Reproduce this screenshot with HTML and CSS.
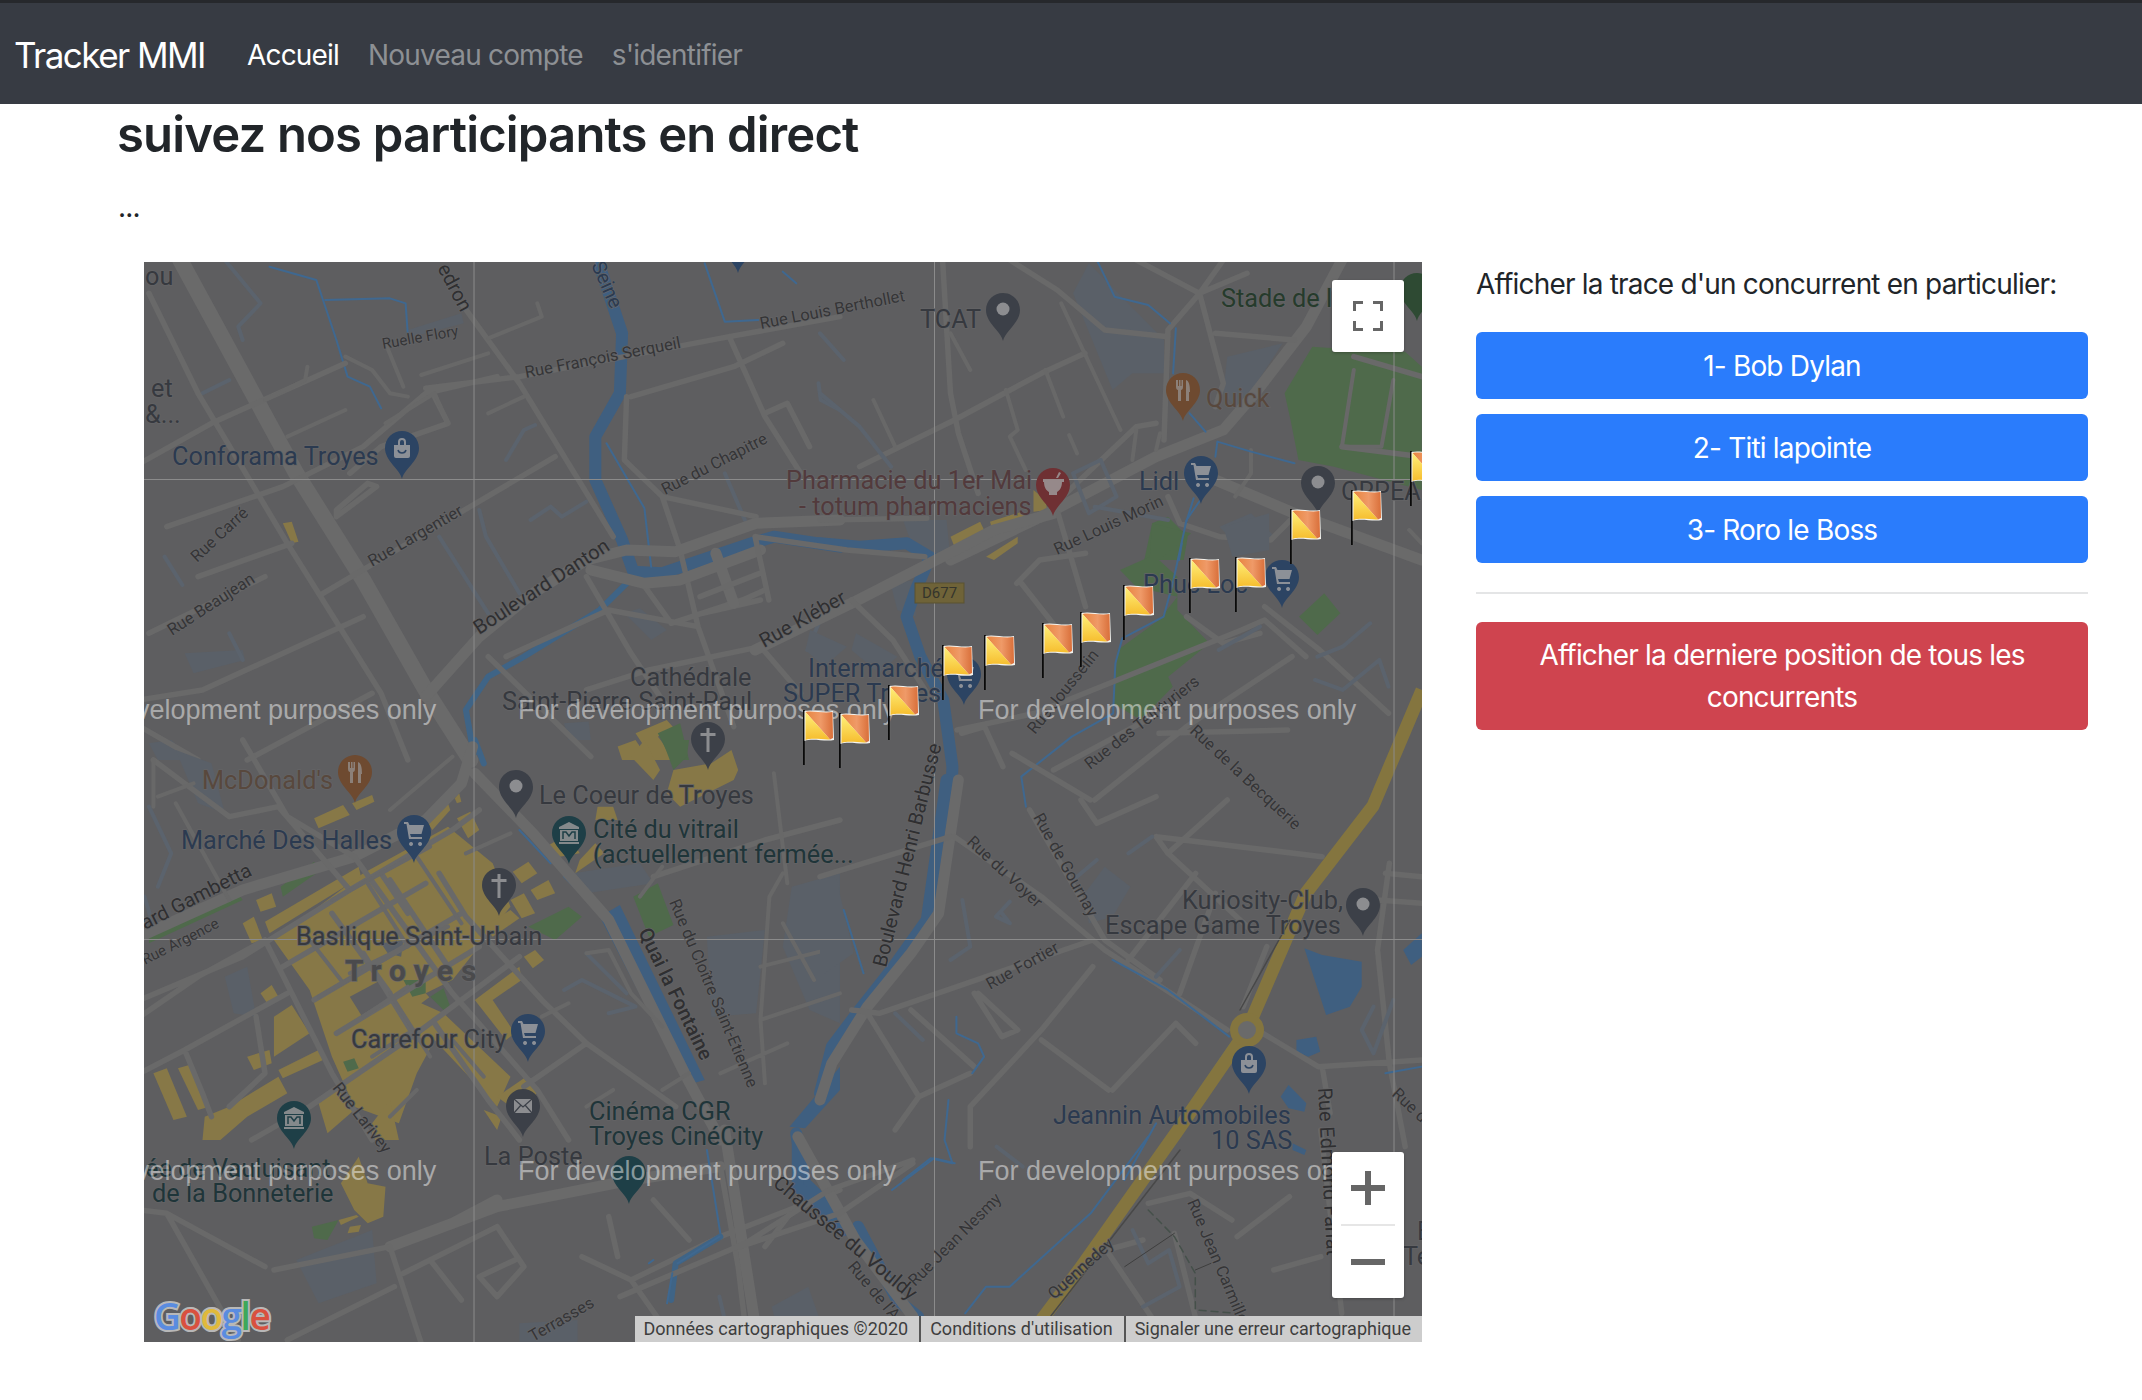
FILE: index.html
```html
<!DOCTYPE html>
<html lang="fr">
<head>
<meta charset="utf-8">
<title>Tracker MMI</title>
<link rel="stylesheet" href="styles.css">
</head>
<body>
<nav class="navbar">
  <a class="brand">Tracker MMI</a>
  <a class="nav-link active">Accueil</a>
  <a class="nav-link">Nouveau compte</a>
  <a class="nav-link">s'identifier</a>
</nav>
<main class="page">
  <h1 class="title">suivez nos participants en direct</h1>
  <p class="dots">...</p>
  <div class="row">
    <div class="map">
      <svg class="map-svg" width="1278" height="1080" viewBox="144 262 1278 1080" xmlns="http://www.w3.org/2000/svg">
        <defs>
          <linearGradient id="fy" x1="0" y1="0" x2="0" y2="1"><stop offset="0" stop-color="#fff07a"/><stop offset="1" stop-color="#f6bd2e"/></linearGradient>
          <linearGradient id="fo" x1="0" y1="0" x2="1" y2="0"><stop offset="0" stop-color="#e8853f"/><stop offset=".55" stop-color="#ef9a68"/><stop offset="1" stop-color="#d96f3a"/></linearGradient>
          <linearGradient id="fp" x1="0" y1="0" x2="1" y2="0"><stop offset="0" stop-color="#000"/><stop offset=".7" stop-color="#222"/><stop offset="1" stop-color="#666"/></linearGradient>
          <symbol id="flag" viewBox="0 0 34 56" width="34" height="56" overflow="visible">
            <rect x="0" y="0" width="2.5" height="55" fill="url(#fp)"/>
            <path d="M1.5 1 C10 -1 20 3 30 1 L31 30 C22 32 10 28 1.5 31 Z" fill="#f5f5f0"/>
            <path d="M2.5 2 C10 0.5 20 3.5 29.5 2 L30 28 L27 29.5 Z" fill="url(#fo)"/>
            <path d="M2.5 2 L27 29.5 C20 30 10 27.5 2.5 30 Z" fill="url(#fy)"/>
          </symbol>
          <symbol id="pin" viewBox="0 0 34 48" width="34" height="48">
            <path d="M17 48 C15 38 0 30 0 17 C0 7 8 0 17 0 C26 0 34 7 34 17 C34 30 19 38 17 48 Z" fill="currentColor"/>
          </symbol>
          <g id="g-dot"><circle cx="17" cy="16" r="6.5" fill="#8c8d90"/></g>
          <g id="g-cross"><path d="M15.5 6h3v5h6v3h-6v16h-3V14h-6v-3h6z" fill="#8c8d90"/></g>
          <g id="g-cart"><path d="M7 7h4l1.500 3H27l-2.500 9H13l1 3h11v2H12L9.500 9H7z M14 27a2 2 0 1 0 .1 0z M23 27a2 2 0 1 0 .1 0z" fill="#8c9097"/></g>
          <g id="g-bag"><path d="M9 14h16v11a2 2 0 0 1-2 2H11a2 2 0 0 1-2-2z M13 14v-3a4 4 0 0 1 8 0v3h-2v-3a2 2 0 0 0-4 0v3z" fill="#8c9097"/><path d="M13 19c1 4 7 4 8 0" fill="none" stroke="#2c4463" stroke-width="1.500"/></g>
          <g id="g-fork"><path d="M10 7v7c0 2 1 3 2 3v11h3V17c1 0 2-1 2-3V7h-1.500v6h-1V7h-1.500v6h-1V7z M20 28V7c3 1 4 5 4 12h-1v9z" fill="#8c8078"/></g>
          <g id="g-mus"><path d="M17 6l10 5v2H7v-2z M8 14h18v11H8z M7 26h20v2H7z" fill="#84898b"/><path d="M11 23v-7l3 0 3 4 3-4 3 0v7" fill="none" stroke="#1e3f47" stroke-width="1.500"/></g>
          <g id="g-mail"><path d="M8 10h18v14H8z" fill="#8c8d90"/><path d="M8 10l9 8 9-8 M8 24l7-8 M26 24l-7-8" fill="none" stroke="#3c4048" stroke-width="1.200"/></g>
          <g id="g-mort"><path d="M7 11h21v3h-2c0 6-3 9-5 10v3H13v-3c-2-1-5-4-5-10H7z M20 10l3-6 2 1-3 5z" fill="#96898a"/></g>
        </defs>

        <rect x="144" y="262" width="1278" height="1080" class="land"/>

        <g class="z6" transform="translate(140 260) scale(.4464 .3333)">
          <polygon class="pale" points="600,210 720,160 725,190 610,230"/>
          <polygon class="pale" points="1085,1060 1120,1045 1180,1110 1145,1140"/>
          <polygon class="pale" points="100,1180 230,1170 235,1200 120,1240"/>
          <polygon class="pale" points="20,1450 70,1440 120,1500 40,1500"/>
          <polygon class="pale" points="950,1390 1005,1385 1010,1440 960,1440"/>
          <path class="w-thick" d="M1030 20 L1080 220 L1075 400 L1020 530 L1020 660 L1080 840 L1105 935 L1170 940 L1370 850 L1420 830 L1568 860"/>
          <path class="w-mid" d="M1090 970 L1030 1050 L860 1190 L780 1250 L730 1350 L750 1500"/>
          <path class="w-thin" d="M290 20 L395 60 L440 240 L465 350 L515 380 L540 445 M415 120 L560 115 L595 130 L600 225 M1265 10 L1310 185 L1385 180 M1045 550 L1130 745 L1145 920 M1440 35 L1470 70"/>
          <path class="pb" d="M190 0 L270 130 L220 200 L230 240 M55 890 L95 975 M670 830 L780 1060 M760 750 L775 830 L850 1000 M1310 640 L1355 780 M1495 1170 L1530 1060 M140 400 L200 360 M200 1120 L230 1200 M875 780 L920 740 L945 770 L1000 725 M820 600 L860 510 L885 495 M1520 370 L1525 420 L1568 450"/>
          <polygon class="yel" points="320,790 340,785 355,845 340,850"/>
          <polygon class="yel" points="1070,1460 1110,1440 1140,1500 1080,1500"/>
          <polygon class="yel" points="1110,1420 1180,1380 1200,1410 1160,1430 1200,1500 1150,1500"/>
          <polygon class="grn" points="1160,1420 1210,1390 1230,1500 1190,1500"/>
          <path class="r1" d="M90 0 L350 640 L500 960 L640 1290 L740 1500"/>
          <path class="r3" d="M20 100 L130 400 L330 850 L540 1300 L600 1500 M720 130 L850 370 L1060 830 M640 385 L850 350 L1320 230 L1568 170 M1100 410 L1330 320 L1440 250 M1320 230 L1400 470 L1480 640 M0 610 L160 490 L460 310 M60 800 L320 680 L500 560 L640 400 L800 350 M130 950 L340 850 M20 1120 L280 950 M0 1320 L140 1290 L500 1070 M410 1000 L930 590 M1090 410 L1085 600 L1170 710 L1210 870 L1250 1100 L1330 1400 M1170 710 L1380 770 M1400 460 L1450 430 L1500 560 M1120 960 L1190 1090 L1350 1020 L1400 990 M1000 950 L1100 1180 L1180 1340 M820 1190 L1050 1050 L1250 1100 M1260 1060 L1390 1020 M1000 1290 L1140 1230 L1390 1160 L1480 1300 M780 1190 L1010 1490 M240 1500 L520 1300 M0 1400 L130 1500 M650 385 L690 490 L540 560 L470 640 M440 770 L530 680 L510 670 L440 750 Z"/>
          <path class="r2" d="M640 1310 L760 1130 L880 1000 L1000 900 L1090 870 L1200 875 L1380 790 L1568 780 M1290 880 L1330 1030 M1010 930 L1130 970 L1210 960 L1390 870"/>
          <path class="r4" d="M550 250 L590 380 M460 290 L520 330 L560 400 L600 410 M780 235 L900 170 L890 130 M630 345 L780 280 M780 460 L860 410 M280 420 L370 360 L375 320 M330 530 L460 450 M550 490 L660 400 L690 490"/>
        </g>

        <g class="z7" transform="translate(140 740) scale(.4464 .3333)">
          <polygon class="pale" points="1270,590 1400,570 1380,820 1280,830"/>
          <polygon class="pale" points="1460,440 1568,400 1568,850 1500,810 1440,620"/>
          <polygon class="pale" points="970,400 1120,370 1150,430 1000,460"/>
          <polygon class="pale" points="190,710 240,680 260,830 210,820"/>
          <polygon class="pale" points="80,30 160,70 190,220 130,190"/>
          <polygon class="water" points="1030,530 1075,495 1265,1020 1225,1035"/>
          <polygon class="water" points="1455,1160 1568,980 1568,1050 1490,1165"/>
          <path class="w-mid" d="M750 0 L770 70"/>
          <path class="w-thin" d="M760 130 L840 240 M850 270 L920 370 M950 410 L1010 490"/>
          <path class="pb" d="M950 750 L990 720 L1110 800 L1050 820 M1000 640 L1090 760 M20 200 L70 340 L40 440 M10 470 L30 560"/>
          <g class="yel">
            <polygon points="300,600 500,400 690,260 790,370 830,500 700,720 640,760 680,820 830,1010 800,1100 660,900 620,1000 580,1150 480,1100 430,950 380,750"/>
            <polygon points="390,235 455,195 470,225 400,265"/>
            <polygon points="475,190 520,165 525,185 485,210"/>
            <polygon points="640,240 690,190 695,210 655,270"/>
            <polygon points="705,175 715,160 720,185 710,190"/>
            <polygon points="710,235 740,215 760,270 735,295"/>
            <polygon points="835,395 870,365 890,400 855,430"/>
            <polygon points="875,450 915,420 930,460 890,480"/>
            <polygon points="830,480 860,460 885,520 855,535"/>
            <polygon points="770,560 830,510 850,535 790,590"/>
            <polygon points="280,545 490,380 495,410 290,580"/>
            <polygon points="260,480 295,460 305,500 270,515"/>
            <polygon points="230,550 255,530 275,600 250,610"/>
            <polygon points="270,760 295,735 310,770 285,790"/>
            <polygon points="300,830 340,795 380,880 300,950"/>
            <polygon points="240,950 290,930 295,970 255,990"/>
            <polygon points="310,990 400,930 410,960 320,1015"/>
            <polygon points="30,1000 60,985 105,1130 75,1140"/>
            <polygon points="85,985 110,975 155,1100 130,1110"/>
            <polygon points="750,780 850,680 855,720 790,780 840,880 820,900"/>
            <polygon points="860,650 885,630 905,660 880,685"/>
            <polygon points="145,1130 200,1100 310,1010 330,1060 240,1130 180,1200 140,1200"/>
            <polygon points="800,1070 860,1015 890,1060 840,1110"/>
            <polygon points="770,1110 810,1130 800,1170"/>
            <polygon points="1100,50 1130,0 1165,90 1150,120"/>
            <polygon points="1195,90 1280,70 1325,30 1340,90 1330,120 1210,200 1180,160"/>
            <polygon points="1025,200 1060,200 1070,240 1020,240"/>
            <polygon points="910,320 960,280 985,340 940,350"/>
            <polygon points="985,360 1020,310 1040,340 975,400"/>
            <polygon points="400,1090 450,1040 480,1110 420,1180"/>
            <polygon points="520,1150 560,1080 580,1200 520,1200"/>
          </g>
          <polygon class="land" points="470,770 540,720 565,770 500,835"/>
          <polygon class="pale" points="540,610 590,600 585,650 555,640"/>
          <polygon class="land" points="630,790 700,720 740,770 680,820"/>
          <g class="grn">
            <polygon points="870,560 960,500 990,530 930,600"/>
            <polygon points="1105,470 1160,430 1195,555 1140,590"/>
            <polygon points="1170,0 1230,0 1225,50 1195,90"/>
            <polygon points="315,440 390,365 400,395 320,470"/>
            <polygon points="20,590 220,460 230,480 20,610"/>
            <polygon points="650,770 680,745 695,800 680,810"/>
            <polygon points="590,720 640,720 640,760 610,770"/>
            <polygon points="455,965 480,955 490,985 465,995"/>
          </g>
          <path class="r2" d="M0 590 L230 450 L480 350 L640 240 L720 130 L745 20 M750 100 L880 280 L1050 540 L1220 1000 L1300 1200"/>
          <path class="r3" d="M0 780 L230 650 L470 450 L700 270 L760 210 M230 0 L330 230 L480 350 L700 760 L890 1050 L960 1200 M330 760 L100 930 L0 1000 M850 650 L620 880 L380 1100 L250 1200 M660 850 L780 1080 L850 1200 M280 600 L340 760 L430 1000 L520 1200 M670 400 L730 530 L900 780 L1000 910 L1200 1100 M1000 910 L860 1040 M0 830 L130 710 L280 600 M540 400 L600 520 M1150 410 L1400 300 L1568 240 M260 830 L280 1000 L200 1100 M100 930 L140 1060 L160 1130 M30 60 L100 130 L200 230 L310 200 L470 450 M320 680 L640 430 M390 780 L720 520 M440 880 L760 620 M430 520 L560 760 M560 420 L690 680 M500 640 L620 900"/>
          <path class="r4" d="M1440 400 L1410 470 L1390 840 L1400 1030 M1390 680 L1568 620 M1440 550 L1510 720 M1420 100 L1450 430 M1390 840 L1568 760 M1300 1000 L1450 910 M1000 640 L1050 630 L1100 760 L1170 860 M1230 1000 L1170 1050 M1000 1100 L1060 1050 M620 1050 L560 1130 M1170 380 L1120 470 M30 60 L30 200 M40 170 L120 130 M80 190 L200 480 M900 830 L960 790 M700 50 L560 210 M730 340 L830 280 M430 480 L650 320 M510 430 L600 620 M620 350 L720 550 M470 700 L690 560 M400 770 L650 580 M560 760 L650 950 M380 600 L450 720 M500 830 L600 740 M520 950 L600 880 M700 900 L770 1010"/>
        </g>

        <g class="z8" transform="translate(820 260) scale(.3954 .3333)">
          <polygon class="grn" points="1175,400 1245,260 1300,265 1295,275 1480,275 1522,320 1522,690 1300,620 1210,600 1190,480"/>
          <polygon class="grn" points="840,790 880,770 930,830 920,900 820,900"/>
          <polygon class="pale" points="640,100 680,10 870,240 870,340 790,340 740,390"/>
          <polygon class="pale" points="1030,290 1170,250 1060,450 1020,400"/>
          <polygon class="pale" points="1010,800 1090,760 1150,830 1060,860"/>
          <polygon class="pale" points="210,780 320,780 330,900 240,880"/>
          <g class="yel">
            <polygon points="330,830 405,785 415,810 340,860"/>
            <polygon points="430,785 510,755 525,775 435,805"/>
            <polygon points="420,890 500,830 500,850 440,900"/>
            <polygon points="540,690 570,720 575,750 540,755"/>
          </g>
          <path class="r2" d="M1320 0 L1230 200 L1100 400 L1020 510 L850 590 L560 770 L330 900 M960 640 L1200 760 L1522 900"/>
          <path class="r3" d="M310 0 L330 400 L350 520 L400 700 M100 620 L340 480 L560 340 L670 280 M0 780 L270 775 M480 0 L600 90 L720 210 L880 230 M960 100 L880 210 L870 540 M960 100 L1020 370 L1000 440 M1000 220 L1200 240 M560 770 L800 500 L850 490 M1350 290 L1522 350 M1320 560 L1522 590 M880 710 L910 790 L1010 830 L1140 840 L1190 780 M800 0 L960 100 L1080 40 M960 100 L1020 0"/>
          <path class="r4" d="M610 130 L760 510 M470 390 L500 510 L480 530 L520 630 M135 420 L190 560 M630 525 L650 580 M570 330 L615 470 M1350 330 L1320 560 L1420 560 L1450 360 M800 510 L790 600 M860 520 L850 570 M1490 810 L1522 850 M330 220 L380 330 M1090 570 L1090 640 L1050 710"/>
          <path class="pb" d="M0 400 L100 500 L180 620 M0 220 L60 300 M640 640 L710 600 L750 710 L680 760 Z"/>
          <path class="w-thin" d="M700 0 L745 110 L830 135 L885 190 M900 205 L893 340 M935 460 L975 515 M1005 545 L1000 590 M1005 545 L1090 575 L1200 610 M945 715 L925 790 M915 850 L908 900"/>
          <path class="w-thick" d="M0 850 L100 860 L220 850 L290 900"/>
        </g>

        <g class="z3" transform="translate(700 500) scale(.459 .3333)">
          <polygon class="pale" points="240,390 320,440 270,500 230,450"/>
          <polygon class="pale" points="340,400 430,470 390,520 330,450"/>
          <polygon class="pale" points="415,250 470,240 470,350 430,330"/>
          <polygon class="pale" points="1140,80 1240,40 1240,150 1160,170"/>
          <polygon class="grn" points="985,70 1070,100 1000,180 1040,230 1040,330 1110,430 1020,530 1030,560 960,660 900,610 910,450 1000,360 1040,290 950,260 915,210 980,170"/>
          <polygon class="grn" points="1305,350 1360,280 1395,340 1345,405"/>
          <path class="w-thick" d="M500 175 L470 270 L450 350 L480 470 L530 600 L550 800 L545 960"/>
          <path class="w-thin" d="M1090 0 L1060 60 L1030 250 L1010 350 L920 415 L905 490 L900 640 L810 710 L700 830 L710 920"/>
          <path class="r2" d="M120 450 L330 310 L500 190 L640 90 L770 40"/>
          <path class="r3" d="M120 110 L150 300 M0 290 L130 220 M120 110 L320 150 L490 170 M330 300 L420 420 L500 590 M690 250 L740 180 L840 160 M700 250 L780 390 M780 40 L840 320 M570 700 L620 680 L660 800 M560 690 L730 640 L1000 490 L1180 390 L1230 360 L1320 470 M1060 350 L1140 430 L1220 400 M770 810 L1000 640 M1230 320 L1350 450 L1500 640 M860 900 L1060 680 M680 760 L850 900 M1000 700 L1280 690 M1290 470 L1060 680"/>
          <path class="pb" d="M1345 470 L1400 440 L1460 370 M1340 540 L1400 570 L1480 480 L1500 560 M1130 450 L1220 380 M860 20 L1020 60"/>
        </g>

        <g class="z9" transform="translate(820 780) scale(.3954 .3333)">
          <polygon class="pale" points="670,340 720,260 785,320 740,410 680,430"/>
          <polygon class="pale" points="0,300 40,290 85,520 0,590"/>
          <g class="water">
            <polygon points="1225,505 1270,525 1370,545 1370,620 1340,680 1280,705"/>
            <polygon points="1205,780 1255,770 1265,815 1235,830 1205,815"/>
            <polygon points="1185,915 1230,970 1225,995 1185,985 1165,950"/>
            <polygon points="1475,510 1522,460 1522,530 1495,555"/>
            <polygon points="1195,1090 1230,1110 1225,1125 1195,1110"/>
          </g>
          <path class="w-thick" d="M320 0 L300 170 L270 420 L180 570 L100 690 L30 800 L0 940"/>
          <path class="r2" d="M350 0 L300 400 L230 520 L120 680 L30 850 L0 960"/>
          <path class="r3" d="M340 170 L560 350 L720 510 L1030 750 M330 170 L0 290 M530 90 L720 480 L860 600 M690 480 L150 700 L80 690 M690 560 L560 750 L380 980 L380 1100 M560 780 L730 930 M850 170 L1270 230 M850 170 L880 220 L1090 450 M660 60 L700 130 L850 50 M1120 760 L1260 860 L1522 840 M1270 860 L1290 1000 M1440 250 L1410 510 L1440 850 L1480 1100 M1430 280 L1522 290 M1410 360 L1522 370 M880 220 L1030 60 M950 280 L780 540 M1000 340 L910 640 M900 730 L950 790 M900 730 L740 930 M120 700 L250 950 L380 880 M230 690 L390 860 M400 640 L500 750 L460 770 L390 640 M190 1050 L250 950 M1130 500 L1070 680"/>
          <path class="pb" d="M360 360 L380 500 L330 540 M190 700 L260 780 M640 300 L700 240 M780 220 L840 170 M850 590 L910 510 M1400 680 L1370 750 L1400 820 L1450 660 M460 400 L480 430 L445 410 L480 365"/>
          <path class="w-thin" d="M60 390 L110 580 M345 710 L345 760 L400 790 L415 830 L385 880 M325 960 L315 1080 L335 1150 L280 1135 L210 1200 M740 540 L880 630 L1035 770 M1040 790 L920 1000 M850 1030 L770 1200 M1522 860 L1430 880"/>
        </g>

        <g class="z4" transform="translate(140 1100) scale(.4464 .3333)">
          <polygon class="pale" points="350,480 520,390 530,550 400,610"/>
          <polygon class="pale" points="850,670 980,660 980,725 850,725"/>
          <polygon class="grn" points="385,380 445,360 420,420 390,415"/>
          <polygon class="yel" points="470,380 495,375 490,395 465,400"/>
          <polygon class="yel" points="445,360 485,345 490,350 450,375"/>
          <polygon class="yel" points="450,250 490,170 510,250 550,260 545,350 510,370 480,330"/>
          <path class="r2" d="M560 440 L800 320 L1100 240 L1300 200 M700 370 L800 300"/>
          <path class="r3" d="M560 440 L630 730 M300 510 L560 440 M60 340 L220 720 M990 470 L1100 540 L1300 410 L1568 270 M1100 540 L1200 730 M0 330 L60 340 L280 500 M590 520 L800 380 M650 480 L720 600 M800 380 L860 500 L800 590 L760 530 L840 480 M330 720 L570 560 M1050 350 L1070 470 M1300 200 L1340 500 L1360 725 M1150 300 L1230 420 M1400 440 L1480 300"/>
          <path class="w-thin" d="M1270 150 L1300 400 M1140 490 L1150 480"/>
          <path class="w-mid" d="M1190 600 L1200 490 L1300 410"/>
          <path class="w-thick" d="M1470 100 L1490 250 L1568 350"/>
        </g>

        <g class="z5" transform="translate(620 1130) scale(.523 .3333)">
          <polygon class="pale" points="290,530 360,470 380,560 300,590"/>
          <path class="w-thick" d="M340 30 L340 170 L430 300 M455 290 L530 510 L570 560"/>
          <path class="r2" d="M200 0 L260 600 M340 20 L450 330 L560 560"/>
          <path class="r3" d="M0 500 L240 340 L400 180 L560 90 M230 350 L420 250 L560 100 M930 360 L1050 640 M1010 220 L1090 190 L1170 270 M930 360 L1000 330 M1060 310 L1100 560 M1180 320 L1280 200 M1250 420 L1340 380 M1340 0 L1380 550"/>
          <path class="pb" d="M980 300 L1010 400 L1050 360 L1070 470 L1000 530 M190 500 L205 600 M720 50 L770 110"/>
          <path class="w-thin" d="M100 430 L90 520 M110 400 L190 320 M520 180 L600 85 L640 100 M660 550 L700 470 L745 470 L900 250 L1010 20"/>
          <path class="thin-dark" d="M965 410 L1060 310 M1130 400 L1100 420"/>
          <path class="dash" d="M1010 240 L1060 320 L1100 430 L1100 540 L1180 550"/>
        </g>

        <path class="hwy" d="M1422 690 L1373 806 L1306 893 L1247 1030 L1176 1133 L1079 1270 L1025 1342"/>
        <path class="hwy-thin" d="M1290 920 L1240 1010 M1180 1150 L1040 1330"/>
        <circle class="rbt" cx="1247" cy="1030" r="13"/>
        <path class="grid" d="M474 262V1342 M934.500 262V1342 M1394 262V1342 M144 479.500H1422 M144 939.500H1422"/>

        <g class="labels">
          <text class="lb gy" x="145" y="285">ou</text>
          <text class="lb gy" x="151" y="397">et</text>
          <text class="lb gy" x="145" y="423">&amp;...</text>
          <text class="lb nv" x="172" y="465">Conforama Troyes</text>
          <text class="st s14" transform="translate(383 349) rotate(-10)">Ruelle Flory</text>
          <text class="st" transform="translate(526 378) rotate(-11)">Rue François Serqueil</text>
          <text class="st" transform="translate(761 329) rotate(-11)">Rue Louis Berthollet</text>
          <text class="big nv" transform="translate(591 265) rotate(66)">Seine</text>
          <text class="big" transform="translate(437 268) rotate(62)">edron</text>
          <text class="st" transform="translate(665 495) rotate(-27)">Rue du Chapitre</text>
          <text class="st" transform="translate(197 563) rotate(-43)">Rue Carré</text>
          <text class="st" transform="translate(372 567) rotate(-30)">Rue Largentier</text>
          <text class="st" transform="translate(172 636) rotate(-33)">Rue Beaujean</text>
          <text class="big" transform="translate(479 635) rotate(-33)">Boulevard Danton</text>
          <text class="big" transform="translate(764 648) rotate(-29)">Rue Kléber</text>
          <text class="lb gy" x="630" y="686">Cathédrale</text>
          <text class="lb gy" x="502" y="710">Saint-Pierre Saint-Paul</text>
          <text class="lb nv" x="808" y="677">Intermarché</text>
          <text class="lb nv" x="783" y="702">SUPER Troyes</text>
          <text class="lb rd" x="786" y="489">Pharmacie du 1er Mai</text>
          <text class="lb rd" x="799" y="515">- totum pharmaciens</text>
          <text class="lb gy" x="920" y="328">TCAT</text>
          <text class="lb gn" x="1221" y="307">Stade de l</text>
          <text class="lb br" x="1206" y="407">Quick</text>
          <text class="lb nv" x="1139" y="490">Lidl</text>
          <text class="lb gy" x="1341" y="500">ORPEA</text>
          <text class="lb nv" x="1143" y="593">Phuc Loc</text>
          <text class="st" transform="translate(1057 555) rotate(-25)">Rue Louis Morin</text>
          <text class="st" transform="translate(1035 735) rotate(-51)">Rue Jousselin</text>
          <text class="st" transform="translate(1090 770) rotate(-38)">Rue des Teinturiers</text>
          <text class="st" transform="translate(1189 732) rotate(43)">Rue de la Becquerie</text>
          <text class="big" transform="translate(886 968) rotate(-76)">Boulevard Henri Barbusse</text>
          <text class="st" transform="translate(966 843) rotate(43)">Rue du Voyer</text>
          <text class="st" transform="translate(1033 817) rotate(61)">Rue de Gournay</text>
          <text class="st" transform="translate(990 990) rotate(-29)">Rue Fortier</text>
          <text class="lb gy" x="1182" y="909">Kuriosity-Club,</text>
          <text class="lb gy" x="1105" y="934">Escape Game Troyes</text>
          <text class="lb nv" x="1053" y="1124">Jeannin Automobiles</text>
          <text class="lb nv" x="1211" y="1149">10 SAS</text>
          <text class="big" transform="translate(1318 1088) rotate(87)">Rue Edmond Fariat</text>
          <text class="st" transform="translate(1187 1202) rotate(67)">Rue Jean Carmille</text>
          <text class="st" transform="translate(915 1287) rotate(-45)">Rue Jean Nesmy</text>
          <text class="st" transform="translate(1054 1300) rotate(-42)">Quennedey</text>
          <text class="big" transform="translate(772 1185) rotate(40)">Chaussée du Vouldy</text>
          <text class="st" transform="translate(847 1267) rotate(50)">Rue de l'Aube</text>
          <text class="st" transform="translate(1391 1095) rotate(43)">Rue de</text>
          <text class="lb gy" x="1403" y="1265">Te</text>
          <text class="lb gy" x="1417" y="1240">E</text>
          <text class="st" transform="translate(533 1342) rotate(-30)">Terrasses</text>
          <text class="st" transform="translate(332 1088) rotate(52)">Rue Larivey</text>
          <text class="lb br" x="202" y="789">McDonald's</text>
          <text class="lb nv" x="181" y="849">Marché Des Halles</text>
          <text class="lb gy" x="539" y="804">Le Coeur de Troyes</text>
          <text class="lb tl" x="593" y="838">Cité du vitrail</text>
          <text class="lb tl" x="593" y="863">(actuellement fermée...</text>
          <text class="lb gy" x="296" y="945">Basilique Saint-Urbain</text>
          <text class="town" x="345" y="981">Troyes</text>
          <text class="lb gy" x="351" y="1048">Carrefour City</text>
          <text class="big" transform="translate(145 930) rotate(-27)">ard Gambetta</text>
          <text class="st s15" transform="translate(145 965) rotate(-27)">Rue Argence</text>
          <text class="big b19" transform="translate(638 932) rotate(64)">Quai la Fontaine</text>
          <text class="st" transform="translate(669 902) rotate(67)">Rue du Cloître Saint-Etienne</text>
          <text class="lb tl" x="589" y="1120">Cinéma CGR</text>
          <text class="lb tl" x="589" y="1145">Troyes CinéCity</text>
          <text class="lb gy" x="484" y="1165">La Poste</text>
          <text class="lb tl" x="145" y="1177">ée de Vauluisant</text>
          <text class="lb tl" x="152" y="1202">de la Bonneterie</text>
          <rect class="shield" x="915" y="583" width="49" height="20"/>
          <text class="shield-t" x="939.500" y="598">D677</text>
        </g>

        <g class="pins">
          <g class="c-br"><use href="#pin" x="338" y="755"/><use href="#g-fork" x="338" y="755"/></g>
          <g class="c-nv"><use href="#pin" x="397" y="815"/><use href="#g-cart" x="397" y="815"/></g>
          <g class="c-gy"><use href="#pin" x="499" y="770"/><use href="#g-dot" x="499" y="770"/></g>
          <g class="c-tl"><use href="#pin" x="552" y="816"/><use href="#g-mus" x="552" y="816"/></g>
          <g class="c-gy"><use href="#pin" x="482" y="868"/><use href="#g-cross" x="482" y="868"/></g>
          <g class="c-nv"><use href="#pin" x="511" y="1014"/><use href="#g-cart" x="511" y="1014"/></g>
          <g class="c-gy"><use href="#pin" x="506" y="1089"/><use href="#g-mail" x="506" y="1089"/></g>
          <g class="c-tl"><use href="#pin" x="277" y="1101"/><use href="#g-mus" x="277" y="1101"/></g>
          <g class="c-tl"><use href="#pin" x="612" y="1156"/></g>
          <g class="c-gy"><use href="#pin" x="691" y="722"/><use href="#g-cross" x="691" y="722"/></g>
          <g class="c-nv"><use href="#pin" x="385" y="431"/><use href="#g-bag" x="385" y="431"/></g>
          <g class="c-gy"><use href="#pin" x="986" y="293"/><use href="#g-dot" x="986" y="293"/></g>
          <g class="c-br"><use href="#pin" x="1166" y="373"/><use href="#g-fork" x="1166" y="373"/></g>
          <g class="c-rd"><use href="#pin" x="1036" y="468"/><use href="#g-mort" x="1036" y="468"/></g>
          <g class="c-nv"><use href="#pin" x="1184" y="456"/><use href="#g-cart" x="1184" y="456"/></g>
          <g class="c-gy"><use href="#pin" x="1301" y="466"/><use href="#g-dot" x="1301" y="466"/></g>
          <g class="c-nv"><use href="#pin" x="947" y="657"/><use href="#g-cart" x="947" y="657"/></g>
          <g class="c-nv"><use href="#pin" x="1265" y="560"/><use href="#g-cart" x="1265" y="560"/></g>
          <g class="c-gn"><use href="#pin" x="1400" y="273"/></g>
          <g class="c-gy"><use href="#pin" x="1346" y="888"/><use href="#g-dot" x="1346" y="888"/></g>
          <g class="c-nv"><use href="#pin" x="1232" y="1046"/><use href="#g-bag" x="1232" y="1046"/></g>
          <g class="c-nv"><use href="#pin" x="721" y="225"/></g>
        </g>

        <g class="wm">
          <text x="58" y="719">For development purposes only</text>
          <text x="518" y="719">For development purposes only</text>
          <text x="978" y="719">For development purposes only</text>
          <text x="58" y="1180">For development purposes only</text>
          <text x="518" y="1180">For development purposes only</text>
          <text x="978" y="1180">For development purposes only</text>
        </g>

        <text class="glogo" x="154" y="1330"><tspan class="g-b">G</tspan><tspan class="g-r">o</tspan><tspan class="g-y">o</tspan><tspan class="g-b">g</tspan><tspan class="g-g">l</tspan><tspan class="g-r">e</tspan></text>

        <g class="flags">
          <use href="#flag" x="803" y="710"/>
          <use href="#flag" x="839" y="713"/>
          <use href="#flag" x="888" y="685"/>
          <use href="#flag" x="942" y="645"/>
          <use href="#flag" x="984" y="635"/>
          <use href="#flag" x="1042" y="623"/>
          <use href="#flag" x="1080" y="612"/>
          <use href="#flag" x="1123" y="585"/>
          <use href="#flag" x="1189" y="558"/>
          <use href="#flag" x="1235" y="557"/>
          <use href="#flag" x="1290" y="509"/>
          <use href="#flag" x="1351" y="490"/>
          <use href="#flag" x="1410" y="451"/>
        </g>
      </svg>

      <button class="map-btn fullscreen" aria-label="Plein écran">
        <svg width="34" height="34" viewBox="0 0 34 34"><path d="M2 12V2h10v3H5v7z M22 2h10v10h-3V5h-7z M2 22h3v7h7v3H2z M29 22h3v10H22v-3h7z" fill="#666"/></svg>
      </button>
      <div class="map-btn zoom">
        <button class="zoom-b" aria-label="Zoom avant"><svg width="34" height="34" viewBox="0 0 34 34"><path d="M14 0h6v14h14v6H20v14h-6V20H0v-6h14z" fill="#666"/></svg></button>
        <span class="zoom-sep"></span>
        <button class="zoom-b" aria-label="Zoom arrière"><svg width="34" height="34" viewBox="0 0 34 34"><path d="M0 14h34v6H0z" fill="#666"/></svg></button>
      </div>
      <div class="attrib">
        <span class="attrib-i">Données cartographiques ©2020</span>
        <span class="attrib-i">Conditions d'utilisation</span>
        <span class="attrib-i">Signaler une erreur cartographique</span>
      </div>
    </div>
    <aside class="side">
      <p class="side-t">Afficher la trace d'un concurrent en particulier:</p>
      <div class="btns">
        <button class="btn blue">1- Bob Dylan</button>
        <button class="btn blue">2- Titi lapointe</button>
        <button class="btn blue">3- Roro le Boss</button>
      </div>
      <hr class="sep">
      <button class="btn red">Afficher la derniere position de tous les concurrents</button>
    </aside>
  </div>
</main>
</body>
</html>
```
FILE: styles.css
```css
* { box-sizing: border-box; }
html, body { margin: 0; padding: 0; background: #fff; }
body { font-family: Inter, "Liberation Sans", sans-serif; font-size: 28px; line-height: 42px; color: #212529; letter-spacing: -.029em; }

.navbar { height: 104px; background: #373b43; border-top: 3px solid #26282c; display: flex; align-items: center; padding: 3px 0 0 14px; gap: 29px; }
.brand { color: #fff; font-size: 35px; margin-right: 13px; letter-spacing: -.044em; }
.nav-link { color: #8d9094; }
.nav-link.active { color: #fff; }

.page { padding-left: 117px; }
.title { margin: 0; padding-top: 1px; font-size: 49px; line-height: 60px; font-weight: 600; letter-spacing: -.017em; }
.dots { margin: 21px 0 0; height: 76px; padding-left: 1px; }
.row { display: flex; padding-left: 27px; gap: 54px; align-items: flex-start; }

.map { position: relative; width: 1278px; height: 1080px; flex: none; overflow: hidden; background: #5e5e60; }
.map-svg { display: block; }
.land { fill: #5e5e60; }
.pale { fill: #5a6068; }
.water, .water polygon { fill: #3f5f80; }
.yel, .yel polygon { fill: #877847; }
.grn, .grn polygon { fill: #4f6a4b; }

.r1, .r2, .r3, .r4, .pb, .w-thin, .w-mid, .w-thick, .thin-dark, .dash, .hwy, .hwy-thin, .grid {
  fill: none; vector-effect: non-scaling-stroke; stroke-linejoin: round; stroke-linecap: round;
}
.r1 { stroke: #6a6a6a; stroke-width: 16px; }
.r2 { stroke: #6a6a6a; stroke-width: 11px; }
.r3 { stroke: #696969; stroke-width: 5.5px; }
.r4 { stroke: #686868; stroke-width: 4px; }
.pb { stroke: #5b636d; stroke-width: 4px; }
.w-thin { stroke: #3f6890; stroke-width: 2px; }
.w-mid { stroke: #3f6486; stroke-width: 6px; }
.w-thick { stroke: #3f5f80; stroke-width: 12px; }
.thin-dark { stroke: #3e3e3e; stroke-width: 1px; }
.dash { stroke: #45504a; stroke-width: 1.5px; stroke-dasharray: 7 5; }
.hwy { stroke: #84753f; stroke-width: 13px; stroke-linecap: butt; }
.hwy-thin { stroke: #484848; stroke-width: 1.5px; }
.rbt { fill: #6a6a6a; stroke: #84753f; stroke-width: 8px; }
.grid { stroke: #8b8b8b; stroke-width: 1px; stroke-linecap: butt; }

.labels text { letter-spacing: 0; font-family: Roboto, sans-serif; paint-order: stroke; stroke: #646466; stroke-width: 1.5px; }
.lb { font-size: 25.300px; }
.st { font-size: 16.500px; fill: #353537; }
.s14 { font-size: 15px; }
.s15 { font-size: 15px; }
.big { font-size: 20px; fill: #2f2f31; }
.b19 { font-weight: 500; }
.gy { fill: #36393f; }
.labels .nv { fill: #2b3a50; }
.tl { fill: #1f3539; }
.rd { fill: #523a3c; }
.br { fill: #58483d; }
.gn { fill: #263b2c; }
.town { font-size: 30px; font-weight: 700; fill: #4a4a4c; }
.labels .town { letter-spacing: 8px; }
.shield { fill: #6f6338; stroke: #5a5230; stroke-width: 1px; }
.labels .shield-t { font-size: 15px; fill: #35352c; text-anchor: middle; stroke: none; }

.c-gy { color: #3c4048; }
.c-nv { color: #2c4463; }
.c-tl { color: #1e3f47; }
.c-br { color: #6e4a30; }
.c-rd { color: #6f3033; }
.c-gn { color: #2e4a33; }

.wm text { font-family: "Liberation Sans", sans-serif; font-size: 27px; letter-spacing: 0; fill: #ffffff; fill-opacity: .47; }
.glogo { font-family: "Open Sans", sans-serif; font-size: 37px; font-weight: 600; letter-spacing: -1.500px; paint-order: stroke; stroke: #b8b8b8; stroke-width: 4px; }
.g-b { fill: #5a8ce0; }
.g-r { fill: #d9503f; }
.g-y { fill: #e0b93b; }
.g-g { fill: #3ea85a; }

.map-btn { position: absolute; right: 18px; width: 72px; background: #fff; border: 0; border-radius: 3px; padding: 0; box-shadow: 0 1px 3px rgba(0,0,0,.25); }
.fullscreen { top: 18px; height: 72px; display: flex; align-items: center; justify-content: center; }
.zoom { top: 890px; height: 146px; display: flex; flex-direction: column; align-items: center; }
.zoom-b { flex: 1; width: 100%; border: 0; padding: 0; background: none; display: flex; align-items: center; justify-content: center; }
.zoom-sep { width: 54px; height: 2px; background: #e6e6e6; flex: none; }

.attrib { position: absolute; right: 0; bottom: 0; height: 26px; background: #cdcdcd; display: flex; font-family: Roboto, sans-serif; font-size: 18px; line-height: 26px; letter-spacing: 0; color: #3e3e3e; }
.attrib-i { padding: 0 11px 0 9px; border-left: 2px solid #555; }
.attrib-i:first-child { border-left: 0; }

.side { width: 612px; flex: none; }
.side-t { margin: 1px 0 27px; white-space: nowrap; }
.btns { display: flex; flex-direction: column; gap: 15px; }
.btn { display: block; width: 100%; border: 0; border-radius: 6px; color: #fff; font: inherit; letter-spacing: inherit; text-align: center; }
.blue { height: 67px; background: #2a7cfc; }
.red { height: 108px; background: #cf444f; padding: 0 40px; }
.sep { border: 0; height: 2px; background: #e4e5e6; margin: 29px 0 28px; }
```
